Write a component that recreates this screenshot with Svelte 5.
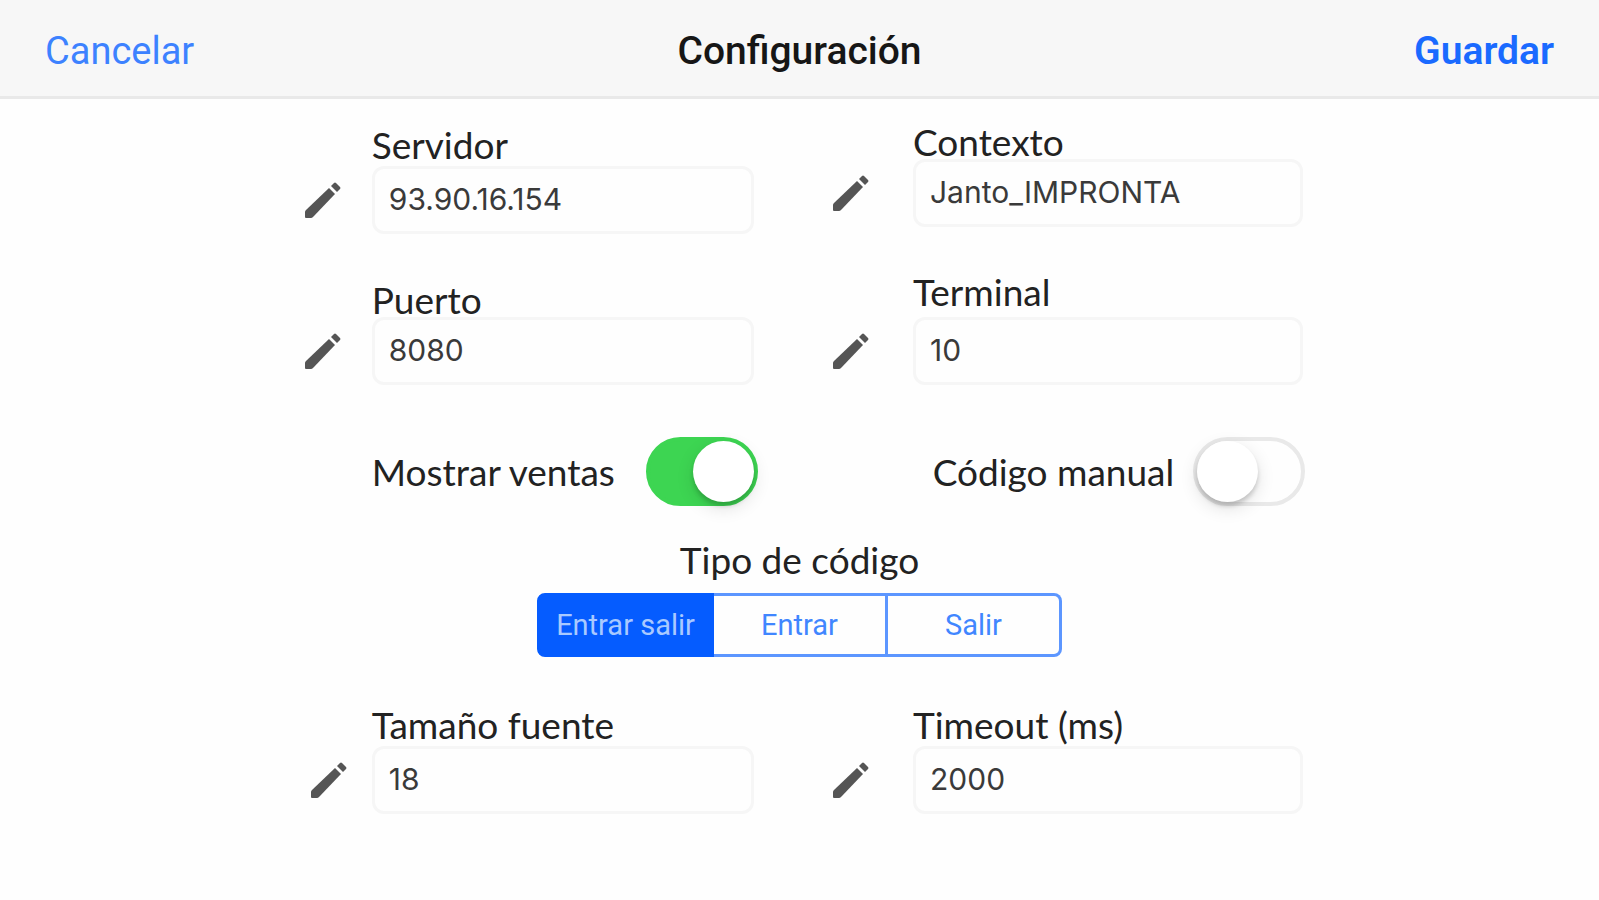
<script lang="ts">
  type Field = { id: string; label: string; variant: string };

  const connectionFields: Field[] = [
    { id: 'servidor', label: 'Servidor', variant: '' },
    { id: 'contexto', label: 'Contexto', variant: 'tight top' },
    { id: 'puerto', label: 'Puerto', variant: 'tight' },
    { id: 'terminal', label: 'Terminal', variant: 'loose' }
  ];
  const displayFields: Field[] = [
    { id: 'fuente', label: 'Tamaño fuente', variant: 'near' },
    { id: 'timeout', label: 'Timeout (ms)', variant: '' }
  ];
  const codeTypes = ['Entrar salir', 'Entrar', 'Salir'];

  const defaults: Record<string, string> = {
    servidor: '93.90.16.154',
    contexto: 'Janto_IMPRONTA',
    puerto: '8080',
    terminal: '10',
    fuente: '18',
    timeout: '2000'
  };

  let values = $state({ ...defaults });
  let showSales = $state(true);
  let manualCode = $state(false);
  let codeType = $state('Entrar salir');

  function cancel(): void {
    values = { ...defaults };
    showSales = true;
    manualCode = false;
    codeType = codeTypes[0];
  }

  function save(event: SubmitEvent): void {
    event.preventDefault();
  }
</script>

{#snippet fieldRow(field: Field)}
  <div class="field {field.variant}">
    <label for={field.id}>{field.label}</label>
    <svg class="pencil" viewBox="0 0 36 36" aria-hidden="true">
      <path d="M1 36q-1 0-1-1v-5q0-1 1-2L24 6l6 6L8 35q-1 1-2 1z" />
      <path d="M26 4l3-3q1-1 2 0l4 4q1 1 0 2l-3 3z" />
    </svg>
    <input id={field.id} type="text" bind:value={values[field.id]} />
  </div>
{/snippet}

<header>
  <button type="button" class="cancel" onclick={cancel}>Cancelar</button>
  <h1>Configuración</h1>
  <button type="submit" class="save" form="settings">Guardar</button>
</header>

<main>
  <form id="settings" onsubmit={save}>
    <div class="grid connection">
      {#each connectionFields as field}
        {@render fieldRow(field)}
      {/each}
    </div>

    <div class="grid switches">
      <div class="switch-row">
        <label for="ventas">Mostrar ventas</label>
        <input id="ventas" type="checkbox" role="switch" bind:checked={showSales} />
      </div>
      <div class="switch-row">
        <label for="manual">Código manual</label>
        <input id="manual" type="checkbox" role="switch" bind:checked={manualCode} />
      </div>
    </div>

    <div class="code-type" role="radiogroup" aria-labelledby="tipo">
      <h2 id="tipo">Tipo de código</h2>
      <div class="segments">
        {#each codeTypes as type}
          <label class:selected={codeType === type}>
            <input type="radio" name="tipo" value={type} bind:group={codeType} />
            {type}
          </label>
        {/each}
      </div>
    </div>

    <div class="grid">
      {#each displayFields as field}
        {@render fieldRow(field)}
      {/each}
    </div>
  </form>
</main>

<style>
  :global(body) {
    margin: 0;
    background-color: #fefefe;
    color: #222;
    font-family: Lato, sans-serif;
  }

  header {
    display: grid;
    grid-template-columns: 1fr auto 1fr;
    align-items: center;
    padding: 27px 45px 21px;
    background-color: #f7f7f7;
    border-bottom: 3px solid #e9e9e9;
    font-family: Roboto, sans-serif;
  }

  h1 {
    margin: 0;
    font-size: 39px;
    font-weight: 500;
    line-height: 48px;
    color: #161616;
  }

  header button {
    padding: 0;
    border: none;
    background: none;
    font: inherit;
    font-size: 39px;
    line-height: 48px;
    cursor: pointer;
  }

  header .cancel {
    justify-self: start;
    font-size: 38px;
    color: #3d82ff;
  }

  header .save {
    justify-self: end;
    font-weight: 600;
    color: #1a6aff;
  }

  form {
    width: 63%;
    margin: 0 auto;
    padding: 26px 0 40px;
  }

  .grid {
    display: grid;
    grid-template-columns: minmax(0, 458fr) minmax(0, 470fr);
    column-gap: 79px;
    align-items: end;
  }

  .connection {
    grid-template-rows: minmax(109px, auto) minmax(111px, auto);
    row-gap: 40px;
  }

  .field {
    display: grid;
    grid-template-columns: auto minmax(0, 1fr);
    column-gap: 44px;
    row-gap: 4px;
    align-items: center;
  }

  .field:nth-child(odd) {
    column-gap: 31px;
    padding-left: 9px;
  }

  .field.near:nth-child(odd) {
    column-gap: 25px;
    padding-left: 15px;
  }

  .field.tight {
    row-gap: 0;
  }

  .field.loose {
    row-gap: 8px;
  }

  .field.top {
    align-self: start;
  }

  label,
  h2 {
    margin: 0;
    font-size: 37px;
    font-weight: 400;
    line-height: 34px;
    white-space: nowrap;
  }

  .field label {
    grid-column: 2;
  }

  .pencil {
    display: block;
    width: 36px;
    height: 36px;
    fill: #555;
  }

  input[type='text'] {
    box-sizing: border-box;
    width: 100%;
    height: 68px;
    padding: 0 14px 3px;
    border: 3px solid #f6f6f6;
    border-radius: 12px;
    background-color: #fefefe;
    color: #3a3a3a;
    font-family: Inter, sans-serif;
    font-size: 30px;
  }

  .switches {
    margin-top: 52px;
  }

  .switch-row {
    display: flex;
    align-items: center;
    justify-content: flex-end;
    gap: 19px;
    margin-right: -2px;
  }

  .switch-row:first-child {
    justify-content: space-between;
    margin-right: -4px;
    padding-left: 76px;
  }

  input[type='checkbox'] {
    flex: none;
    appearance: none;
    box-sizing: border-box;
    display: flex;
    align-items: center;
    width: 112px;
    height: 69px;
    margin: 0;
    padding: 0;
    border: 4px solid #e9e9e9;
    border-radius: 35px;
    background-color: #fefefe;
    cursor: pointer;
  }

  input[type='checkbox']::before {
    content: '';
    width: 61px;
    height: 61px;
    border-radius: 50%;
    background-color: #fff;
    box-shadow: 0 4px 4px rgba(0, 0, 0, 0.16), 0 6px 18px rgba(0, 0, 0, 0.12);
  }

  input[type='checkbox']:checked {
    justify-content: flex-end;
    border-color: #3dd552;
    background-color: #3dd552;
  }

  .code-type {
    display: flex;
    flex-direction: column;
    align-items: center;
    gap: 16px;
    margin: 37px 0 51px;
  }

  .segments {
    display: flex;
    width: 52%;
    min-width: 525px;
  }

  .segments label {
    flex: 1;
    position: relative;
    border: 3px solid #5c96ff;
    font-family: Roboto, sans-serif;
    font-size: 29px;
    line-height: 58px;
    text-align: center;
    color: #4086ff;
    cursor: pointer;
  }

  .segments label + label {
    border-left: none;
  }

  .segments label:first-child {
    border-radius: 8px 0 0 8px;
  }

  .segments label:last-child {
    border-radius: 0 8px 8px 0;
  }

  .segments .selected {
    border-color: #055cff;
    background-color: #055cff;
    color: #a9c9ff;
  }

  .segments input {
    position: absolute;
    inset: 0;
    margin: 0;
    opacity: 0;
    cursor: pointer;
  }
</style>
